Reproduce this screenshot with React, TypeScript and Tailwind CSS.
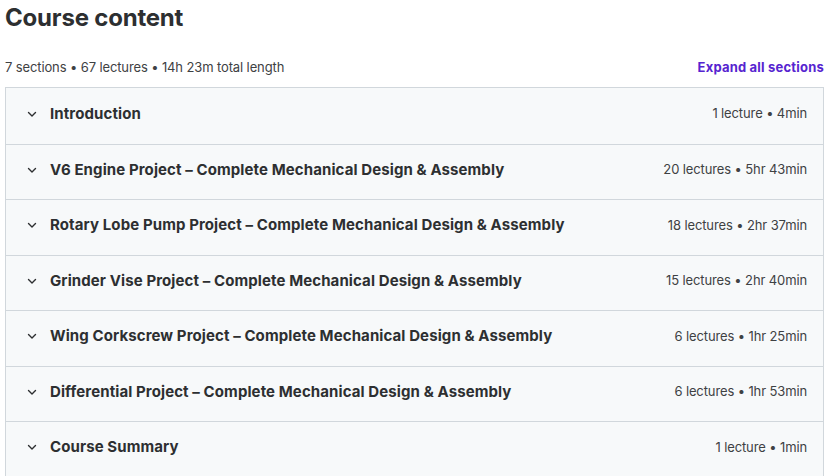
import React from "react";

type Section = { title: string; meta: string };

const sections: Section[] = [
  { title: "Introduction", meta: "1 lecture • 4min" },
  { title: "V6 Engine Project – Complete Mechanical Design & Assembly", meta: "20 lectures • 5hr 43min" },
  { title: "Rotary Lobe Pump Project – Complete Mechanical Design & Assembly", meta: "18 lectures • 2hr 37min" },
  { title: "Grinder Vise Project – Complete Mechanical Design & Assembly", meta: "15 lectures • 2hr 40min" },
  { title: "Wing Corkscrew Project – Complete Mechanical Design & Assembly", meta: "6 lectures • 1hr 25min" },
  { title: "Differential Project – Complete Mechanical Design & Assembly", meta: "6 lectures • 1hr 53min" },
  { title: "Course Summary", meta: "1 lecture • 1min" },
];

const Chevron = () => (
  <svg width="12" height="12" viewBox="0 0 12 12" fill="none" className="shrink-0">
    <path d="M2.5 4.5 6 8l3.5-3.5" stroke="#2d2f31" strokeWidth="1.4" strokeLinecap="round" strokeLinejoin="round" />
  </svg>
);

export default function App() {
  return (
    <div className="w-[825px] h-[476px] overflow-hidden bg-white pl-[5px] pr-[1px] font-['Inter',sans-serif] text-[#2d2f31]">
      <h2 className="text-[24px] font-bold leading-[36px] tracking-[-0.2px]">Course content</h2>
      <div className="mt-[22px] flex items-center justify-between h-[20px]">
        <span className="text-[13px] tracking-[-0.12px] text-[#3e4143]">7 sections • 67 lectures • 14h 23m total length</span>
        <button className="text-[13px] font-bold tracking-[0.2px] text-[#5624d0]">Expand all sections</button>
      </div>
      <div className="mt-[9px] border border-[#d1d7dc]">
        {sections.map((s, i) => (
          <div
            key={s.title}
            className={`flex h-[55.5px] items-center justify-between bg-[#f7f9fa] pb-[4px] pl-[20px] pr-[16px] ${
              i > 0 ? "border-t border-[#d1d7dc]" : ""
            }`}
          >
            <div className="flex items-center gap-[12px]">
              <Chevron />
              <span className="text-[15px] font-bold tracking-[0.1px]">{s.title}</span>
            </div>
            <span className="text-[13px] tracking-[-0.12px] text-[#3e4143]">{s.meta}</span>
          </div>
        ))}
      </div>
    </div>
  );
}
